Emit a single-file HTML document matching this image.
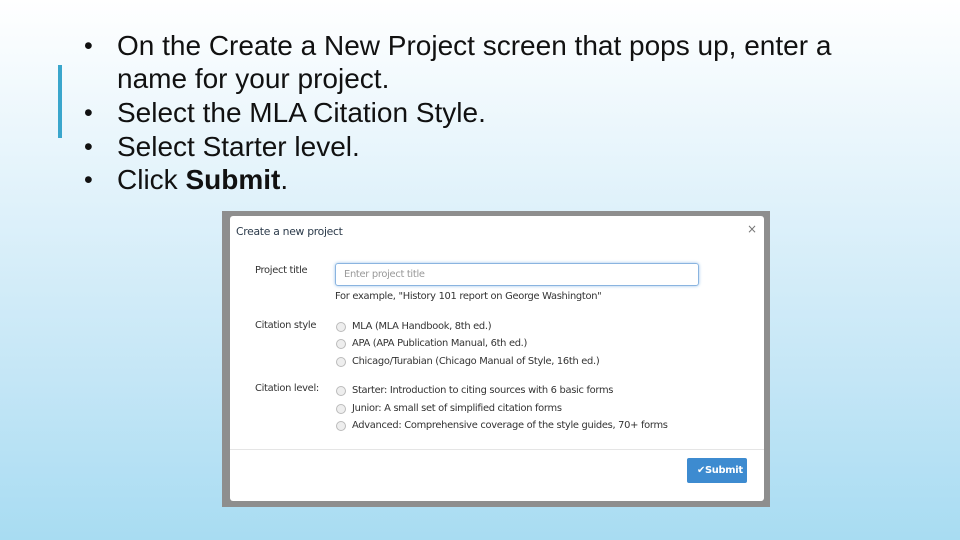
<!DOCTYPE html>
<html><head><style>
body{margin:0;width:960px;height:540px;overflow:hidden;position:relative;background:linear-gradient(#ffffff 0%,#eaf6fc 25%,#c4e6f6 70%,#a8dcf2 100%);font-family:"Liberation Sans",sans-serif;}
.bar{position:absolute;left:58px;top:65px;width:4px;height:73px;background:#3aa6cc;}
.l{position:absolute;left:117px;font-size:28px;color:#111;white-space:nowrap;line-height:30px}
.b{position:absolute;left:84px;font-size:25px;color:#111;line-height:30px}
.shot{position:absolute;left:222px;top:211px;width:548px;height:296px;background:#8e8e8e;}
.m{position:absolute;left:230px;top:216px;width:534px;height:285px;background:#fff;border-radius:3px;}
.t{position:absolute;font-family:"DejaVu Sans","Liberation Sans",sans-serif;font-size:9.9px;color:#333;white-space:nowrap;letter-spacing:-0.3px}
.r{position:absolute;left:106px;width:8px;height:8px;border-radius:50%;border:1px solid #bbb;background:#eee;}
</style></head><body>
<div class="bar"></div>
<div class="b" style="top:31px">•</div><div class="l" style="top:31px">On the Create a New Project screen that pops up, enter a</div>
<div class="l" style="top:64px">name for your project.</div>
<div class="b" style="top:98px">•</div><div class="l" style="top:98px">Select the MLA Citation Style.</div>
<div class="b" style="top:132px">•</div><div class="l" style="top:132px">Select Starter level.</div>
<div class="b" style="top:165px">•</div><div class="l" style="top:165px">Click <b>Submit</b>.</div>
<div class="shot"></div>
<div class="m">
<div class="t" style="left:6px;top:9px;font-size:10.8px;color:#2b3a4a">Create a new project</div>
<div class="t" style="left:517px;top:6px;font-size:12px;color:#777">×</div>
<div class="t" style="left:25px;top:49px">Project title</div>
<div style="position:absolute;left:105px;top:47px;width:362px;height:21px;border:1px solid #8ab4e0;border-radius:3px;box-shadow:0 0 3px #9cc3ea"></div>
<div class="t" style="left:114px;top:53px;color:#999">Enter project title</div>
<div class="t" style="left:105px;top:75px">For example, "History 101 report on George Washington"</div>
<div class="t" style="left:25px;top:104px">Citation style</div>
<div class="r" style="top:106px"></div><div class="t" style="left:122px;top:105px">MLA (MLA Handbook, 8th ed.)</div>
<div class="r" style="top:123px"></div><div class="t" style="left:122px;top:122px">APA (APA Publication Manual, 6th ed.)</div>
<div class="r" style="top:141px"></div><div class="t" style="left:122px;top:140px">Chicago/Turabian (Chicago Manual of Style, 16th ed.)</div>
<div class="t" style="left:25px;top:167px">Citation level:</div>
<div class="r" style="top:170px"></div><div class="t" style="left:122px;top:169px">Starter: Introduction to citing sources with 6 basic forms</div>
<div class="r" style="top:188px"></div><div class="t" style="left:122px;top:187px">Junior: A small set of simplified citation forms</div>
<div class="r" style="top:205px"></div><div class="t" style="left:122px;top:204px">Advanced: Comprehensive coverage of the style guides, 70+ forms</div>
<div style="position:absolute;left:0;top:233px;width:534px;height:1px;background:#e5e5e5"></div>
<div style="position:absolute;left:457px;top:242px;width:60px;height:25px;background:#3d8bd0;border-radius:2px"></div>
<div class="t" style="left:467px;top:249px;color:#fff;font-weight:bold">✔Submit</div>
</div>
</body></html>
